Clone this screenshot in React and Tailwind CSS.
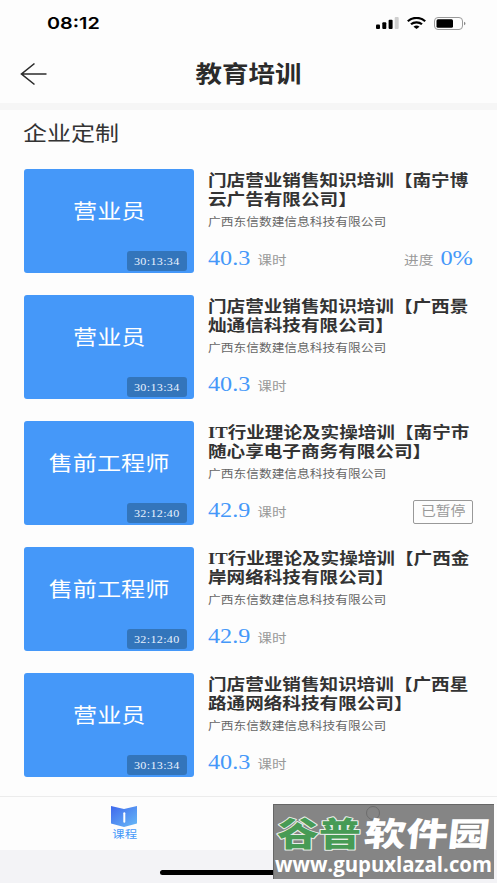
const courses = [
    { id: 1, cover: "营业员", duration: "30:13:34", title: ["门店营业销售知识培训【南宁博", "云广告有限公司】"], hours: "40.3", progress: "0%" },
    { id: 2, cover: "营业员", duration: "30:13:34", title: ["门店营业销售知识培训【广西景", "灿通信科技有限公司】"], hours: "40.3" },
    { id: 3, cover: "售前工程师", duration: "32:12:40", title: ["IT行业理论及实操培训【南宁市", "随心享电子商务有限公司】"], hours: "42.9", paused: true },
    { id: 4, cover: "售前工程师", duration: "32:12:40", title: ["IT行业理论及实操培训【广西金", "岸网络科技有限公司】"], hours: "42.9" },
    { id: 5, cover: "营业员", duration: "30:13:34", title: ["门店营业销售知识培训【广西星", "路通网络科技有限公司】"], hours: "40.3" },
];

function StatusBar() {
    return (
        <div className="flex h-[46px] items-center justify-between pl-[47px] pr-[31px]">
            <span className="origin-left scale-x-[1.2] font-['Inter'] text-[16.5px] font-semibold leading-none text-black">08:12</span>
            <div className="flex items-center gap-[8px]">
                <svg width="23" height="12" viewBox="0 0 23 12">
                    <rect x="0" y="7.5" width="4" height="4.5" rx="1" />
                    <rect x="6.3" y="5.3" width="4" height="6.7" rx="1" />
                    <rect x="12.6" y="2.8" width="4" height="9.2" rx="1" />
                    <rect x="18.7" y="0" width="4" height="12" rx="1" fill="#cfcfcf" />
                </svg>
                <svg width="19" height="12" viewBox="0 0 19 12" fill="none" stroke="#000" strokeWidth="2.2">
                    <path d="M.8 4.2C5.5-.2 13.5-.2 18.2 4.2" />
                    <path d="M4 7.3c3-2.7 8-2.7 11 0" />
                    <path d="M6.5 9.7c1.8-1.6 4.2-1.6 6 0l-3 2.3z" fill="#000" stroke="none" />
                </svg>
                <svg width="32" height="13" viewBox="0 0 32 13">
                    <rect x=".5" y=".5" width="28" height="12" rx="3.5" fill="none" stroke="#999" />
                    <rect x="2.5" y="2.3" width="16.5" height="8.4" rx="1.5" />
                    <path d="M30 4.7c2 .6 2 3 0 3.6z" fill="#888" />
                </svg>
            </div>
        </div>
    );
}

function CourseCard({ course }) {
    return (
        <div className="flex h-[104px] gap-[14px]">
            <div className="relative flex w-[170px] shrink-0 justify-center rounded-[3px] bg-[#4598f9] pt-[28px]">
                <span className="h-[30px] scale-x-[1.16] whitespace-nowrap text-[20.8px] leading-[30px] text-white">{course.cover}</span>
                <div className="absolute bottom-[2px] right-[7px] flex h-[20px] w-[60px] items-center justify-center rounded-[3px] bg-[#3375bb]">
                    <span className="scale-x-[1.1] text-[11px] leading-none tracking-[0.3px] text-[#e8f2ff]">{course.duration}</span>
                </div>
            </div>
            <div className="flex w-[265px] flex-col">
                <h3 className="mt-[2px] w-[228px] origin-left scale-x-[1.162] whitespace-nowrap text-[16px] font-bold leading-[19px] text-[#333]">
                    {course.title.map((line) => (
                        <span key={line} className="block">{line}</span>
                    ))}
                </h3>
                <p className="mt-[5px] w-[160px] origin-left scale-x-[1.157] whitespace-nowrap text-[11px] leading-[17px] text-[#666]">广西东信数建信息科技有限公司</p>
                <div className="mt-[12px] flex h-[32px] items-center justify-between">
                    <div className="flex origin-left scale-x-[1.18] items-baseline gap-[6px] leading-[30px]">
                        <span className="text-[20.5px] text-[#4598f9]">{course.hours}</span>
                        <span className="text-[12.3px] text-[#999]">课时</span>
                    </div>
                    {course.progress && (
                        <div className="flex origin-right scale-x-[1.19] items-baseline gap-[6px] leading-[30px]">
                            <span className="text-[12.3px] text-[#999]">进度</span>
                            <span className="text-[20.5px] text-[#4598f9]">{course.progress}</span>
                        </div>
                    )}
                    {course.paused && (
                        <div className="mt-[1px] flex h-[24px] w-[60px] items-center justify-center rounded-[2px] border border-[#999]">
                            <span className="scale-x-[1.16] whitespace-nowrap text-[12.8px] leading-none text-[#999]">已暂停</span>
                        </div>
                    )}
                </div>
            </div>
        </div>
    );
}

function Watermark() {
    return (
        <div className="absolute left-[273px] top-[804px] h-[75px] w-[221px] border-l border-t border-[#666] bg-[#858585]">
            <svg width="220" height="74" viewBox="0 0 220 74">
                <circle cx="99" cy="8" r="6.5" fill="none" stroke="#6d6d6d" />
                <g fontFamily="'Noto Sans CJK SC', sans-serif" fontSize="33" fontWeight="900">
                    <text x="0" y="0" transform="translate(3 41) scale(1.27 1)" fill="#479b55" stroke="#e8eee8" strokeWidth="2" paintOrder="stroke" strokeLinejoin="round">谷普</text>
                    <text x="0" y="0" transform="translate(89 41) skewX(-6) scale(1.27 1)" fill="#fff">软件园</text>
                </g>
                <text x="1" y="67" textLength="217" lengthAdjust="spacingAndGlyphs" fill="#fff" fontFamily="'Open Sans', sans-serif" fontSize="21.5" fontWeight="700">www.gupuxlazal.com</text>
            </svg>
        </div>
    );
}

export default function App() {
    return (
        <div className="relative flex h-[883px] w-[497px] flex-col overflow-hidden bg-[#fdfdfd] font-['Liberation_Serif','Noto_Sans_CJK_SC',sans-serif]">
            <StatusBar />
            <header className="grid h-[57px] grid-cols-[60px_1fr_60px] items-center">
                <svg className="mb-[2px] ml-[20px]" width="28" height="24" viewBox="0 0 28 24" fill="none" stroke="#2b2b2b" strokeWidth="1.6">
                    <path d="M14.5 1.5 1.5 12l13 10.5M1.5 12h25" />
                </svg>
                <h1 className="scale-x-[1.16] pt-[1px] text-center text-[22.8px] font-bold leading-none text-[#2b2b2b]">教育培训</h1>
            </header>
            <div className="h-[7px] shrink-0 bg-[#f6f6f6]" />
            <main className="flex h-[686px] shrink-0 flex-col px-[24px]">
                <h2 className="-ml-[1px] mt-[8px] w-[90px] origin-left scale-x-[1.16] text-[20.7px] leading-[32px] text-[#333]">企业定制</h2>
                <div className="mt-[19px] flex flex-col gap-[22.1px]">
                    {courses.map((course) => (
                        <CourseCard key={course.id} course={course} />
                    ))}
                </div>
            </main>
            <nav className="flex h-[54px] shrink-0 border-t border-[#ececec]">
                <div className="flex w-1/2 flex-col items-center pt-[9px]">
                    <svg width="26" height="21" viewBox="0 0 26 21">
                        <defs>
                            <linearGradient id="book" x1="0" y1="0" x2="1" y2="1">
                                <stop offset="0" stopColor="#3f68ed" />
                                <stop offset="1" stopColor="#68bbf7" />
                            </linearGradient>
                        </defs>
                        <path d="M0 0l13 3 13-3v17.5L13 21 0 17.5z" fill="url(#book)" />
                        <path d="M13.3 7.3v8.4" stroke="#fff" strokeWidth="2" strokeLinecap="round" />
                    </svg>
                    <span className="mt-[1px] scale-x-[1.16] text-[10.7px] leading-[13px] text-[#4598f9]">课程</span>
                </div>
            </nav>
            <div className="flex flex-1 justify-center bg-[#f3f3f6] pt-[20px]">
                <div className="h-[5px] w-[177px] rounded-full bg-black" />
            </div>
            <Watermark />
        </div>
    );
}
